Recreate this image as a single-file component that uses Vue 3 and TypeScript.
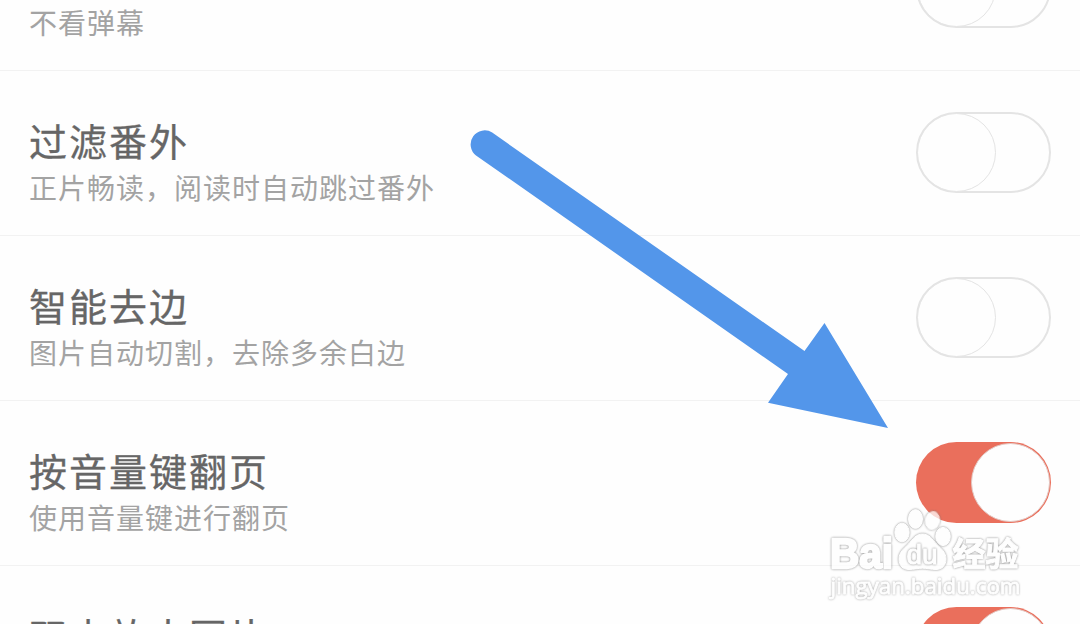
<script setup lang="ts">
interface Setting {
  title: string
  desc: string
  on: boolean
}

const settings: Setting[] = [
  { title: '', desc: '不看弹幕', on: false },
  { title: '过滤番外', desc: '正片畅读，阅读时自动跳过番外', on: false },
  { title: '智能去边', desc: '图片自动切割，去除多余白边', on: false },
  { title: '按音量键翻页', desc: '使用音量键进行翻页', on: true },
  { title: '双击放大图片', desc: '', on: true },
]
</script>

<template>
  <main class="screen">
    <div class="list">
      <section v-for="(item, i) in settings" :key="i" class="row">
        <div class="copy">
          <div class="title">{{ item.title }}</div>
          <div class="desc">{{ item.desc }}</div>
        </div>
        <div class="toggle" :class="{ on: item.on }"><span class="knob"></span></div>
      </section>
    </div>

    <svg class="arrow" width="1080" height="624" viewBox="0 0 1080 624">
      <path d="M492.2 132.6 L804.5 351 L824.5 323 L888 428 L768 402.8 L788 374 L476 155.4 A14 14 0 0 1 492.2 132.6 Z" />
    </svg>

    <svg class="watermark" width="210" height="110" viewBox="0 0 210 110">
      <ellipse cx="82" cy="32.5" rx="7.2" ry="9.3" />
      <ellipse cx="95.5" cy="19" rx="7" ry="9.4" />
      <ellipse cx="112.5" cy="20.5" rx="7" ry="9.1" transform="rotate(10 112.5 20.5)" />
      <ellipse cx="123" cy="36.5" rx="7.3" ry="9.1" />
      <path d="M102.5 34 C96 34 93 39 88.5 44 C84 48.5 79 52 79 59 C79 66 83 69.5 89 69.5 C94 69.5 98 68.2 102.5 68.2 C107 68.2 111 69.5 116 69.5 C122 69.5 126 65.5 126 59 C126 52 121 48.5 116.5 44 C112 39 109 34 102.5 34 Z" />
      <text class="bai" x="10" y="67.5" textLength="63" lengthAdjust="spacingAndGlyphs">Bai</text>
      <text class="du" x="86.5" y="63.5" textLength="31" lengthAdjust="spacingAndGlyphs">du</text>
      <text class="exp" x="132.5" y="65.5" textLength="66" lengthAdjust="spacingAndGlyphs">经验</text>
      <text class="url" x="10.5" y="94" textLength="190" lengthAdjust="spacingAndGlyphs">jingyan.baidu.com</text>
    </svg>
  </main>
</template>

<style>
html,
body {
  margin: 0;
  overflow: hidden;
  background: #fefefe;
}
</style>

<style scoped>
.screen {
  position: relative;
  width: 1080px;
  height: 624px;
  overflow: hidden;
  background: #fefefe;
  font-family: "Noto Sans CJK SC", sans-serif;
}
.list {
  margin-top: -94px;
}
.row {
  display: flex;
  justify-content: space-between;
  box-sizing: border-box;
  height: 165px;
  padding: 41px 29px 0 29px;
  border-bottom: 1px solid #f2f2f2;
}
.copy {
  padding-top: 4px;
}
.title {
  height: 50px;
  line-height: 48px;
  font-size: 38px;
  letter-spacing: 2px;
  color: #666;
  -webkit-text-stroke: 0.3px #666;
  white-space: nowrap;
}
.desc {
  height: 42px;
  line-height: 42px;
  font-size: 28px;
  letter-spacing: 1px;
  color: #a3a3a3;
  white-space: nowrap;
}
.toggle {
  display: flex;
  align-items: center;
  box-sizing: border-box;
  width: 135px;
  height: 81px;
  padding: 0 1px;
  border: 2px solid #e4e4e4;
  border-radius: 41px;
}
.knob {
  box-sizing: border-box;
  flex: none;
  width: 79px;
  height: 79px;
  margin: -1px -2px;
  border: 1px solid #e4e4e4;
  border-radius: 50%;
  background: #fefefe;
}
.toggle.on {
  justify-content: flex-end;
  border: 0;
  padding: 0 1px;
  background: #ea6f5c;
}
.toggle.on .knob {
  margin: 0;
  border-color: #e3c8c3;
}
.arrow {
  position: absolute;
  left: 0;
  top: 0;
  fill: #5396ea;
}
.watermark {
  position: absolute;
  left: 820px;
  top: 500px;
  opacity: 0.74;
  fill: #fff;
  stroke: #fff;
  stroke-width: 1;
  stroke-linejoin: round;
}
.watermark > * {
  filter: drop-shadow(0 0 0.8px #666);
}
.bai {
  font-family: "Liberation Sans", Arial, sans-serif;
  font-size: 43px;
  font-weight: 700;
  stroke-width: 2.5;
}
.du {
  font-family: "Liberation Sans", Arial, sans-serif;
  font-size: 27px;
  font-weight: 400;
  stroke-width: 1;
}
.exp {
  font-size: 33px;
  font-weight: 700;
  stroke-width: 1;
}
.watermark .url {
  font-family: "Open Sans", sans-serif;
  font-size: 22px;
  font-weight: 400;
  stroke-width: 0.8;
  filter: drop-shadow(0 0 0.8px #888);
}
</style>
